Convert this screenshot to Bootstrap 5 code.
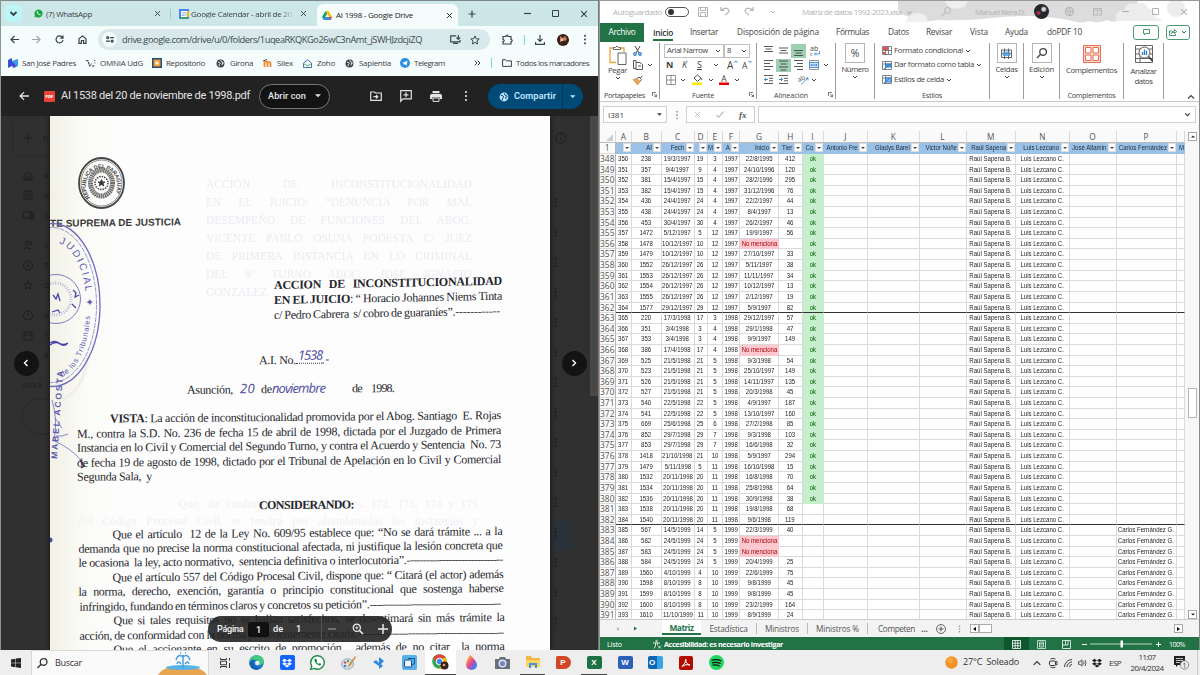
<!DOCTYPE html>
<html lang="es">
<head>
    <meta charset="UTF-8">
    <meta name="viewport" content="width=device-width, initial-scale=1.0">
    <title>Escritorio</title>
    <link href="https://cdn.jsdelivr.net/npm/bootstrap@5.3.0/dist/css/bootstrap.min.css" rel="stylesheet">
    <style>
        body {
            width: 1200px;
            height: 675px;
            overflow: hidden;
            font-family: "Open Sans", "Noto Sans", sans-serif;
            font-size: 8px;
            line-height: 1.2;
            color: #3c4043;
            background: #eee;
        }
        svg { display: block; flex: none; overflow: visible; }
        .ln-ico { fill: none; stroke: currentColor; stroke-width: 1.2; }
        [data-w], .nw { white-space: nowrap; display: inline-block; }
        .bar { display: grid; align-items: center; }
        .bar > svg { justify-self: center; }

        /* Navegador */
        .browser { width: 599px; height: 650px; border-left: 1px solid #8a9596; border-right: 1px solid #777; }
        .tabs-row {
            height: 26px; background: #cde7e9; border-top: 1px solid #7c8889;
            grid-template-columns: 30px 15px 105px 13px 12px 15px 106px 13px 7px 141px 27px 28px 28px 29px 28px;
        }
        .tab-menu { width: 17px; height: 17px; border-radius: 5px; background: #bdf6f8; margin-left: 4px; }
        .tab-on { height: 22px; margin-top: 3px; background: #f5fcfc; border-radius: 6px 6px 0 0; padding: 0 5px; color: #202124; }
        .fade-end { -webkit-mask-image: linear-gradient(90deg, #000 88px, transparent 104px); }
        .vsep { width: 1px; height: 10px; background: #7fd5dc; justify-self: center; }
        .addr-row {
            height: 27px; background: #f5fcfc; color: #33474a;
            grid-template-columns: 3px 21px 23px 22px 24px 4px 392px 6px 22px 12px 20px 26px 18px;
        }
        .pill { height: 21px; border-radius: 11px; background: #d9e9eb; font-size: 9.3px; color: #3c4b4d; }
        .pill-ico { width: 15px; height: 15px; border-radius: 50%; background: #f5fcfc; margin: 0 5px 0 4px; }
        .marks-row {
            height: 23px; padding-bottom: 3px; background: #f5fcfc;
            grid-template-columns: 7px 78px 66px 64px 47px 40px 42px 55px 70px 14px 14px 4px 95px;
        }
        .bm { display: grid; grid-template-columns: 14px auto; align-items: center; justify-content: start; }
        .drive-row {
            height: 40px; background: #222; color: #e3e3e3; font-family: Roboto, sans-serif;
            grid-template-columns: 5px 36px 19px 198px 71px 31px 30px 30px 30px 30px 7px 95px;
        }
        .drive-name { font-size: 11px; }
        .open-with { height: 25px; border: 1px solid #747775; border-radius: 13px; background: #131314; font-size: 9.2px; font-weight: 500; }
        .share-btn { height: 25px; border-radius: 13px; background: #004a77; color: #c2e7ff; font-size: 9.2px; font-weight: 600; }

        /* Visor */
        .viewer { height: 534px; background: #303030; position: relative; overflow: hidden; }
        .under { position: absolute; inset: 0; color: #1c1c1c; }
        .sheet { position: absolute; left: 49px; top: 0; width: 500px; height: 534px; background: #fdfdfe; overflow: hidden; box-shadow: 0 0 5px #111; }
        .sheet-tint { position: absolute; inset: 0; background: linear-gradient(90deg, #f1f1e6, #fafaf5 30px, rgba(255,255,255,0) 70px); }
        .ghost { position: absolute; left: 156px; top: 59px; width: 266px; font: 11.5px/18px "Liberation Serif", serif; color: #ebebf0; filter: blur(.6px); }
        .ghost div, .ghost-low div { text-align: justify; text-align-last: justify; white-space: nowrap; }
        .ghost-low { position: absolute; left: 28px; top: 380px; width: 400px; font: bold 11.5px/17.4px "Liberation Serif", serif; color: #f3f3f7; filter: blur(.6px); }
        .scan { position: relative; transform: skewY(-.5deg); transform-origin: 0 0; font: 12px/14.45px "Liberation Serif", serif; color: #26262b; letter-spacing: -.27px; }
        .scan p { margin: 0; height: 14.45px; white-space: pre; }
        .court { padding-top: 98.5px; font: bold 10px/16px "Liberation Sans", sans-serif; color: #3a3a3a; transform: skewY(-.2deg); }
        .case-box { margin: 49px 0 0 224px; transform: skewY(-.6deg); transform-origin: 0 0; }
        .case-box p { height: 15px; }
        .hand { font: italic 400 13px/14px "Open Sans", sans-serif; color: #4b4b9c; letter-spacing: 0; }
        .sheet-art { position: absolute; left: 0; top: 0; }
        .round { position: absolute; top: 234.5px; width: 25px; height: 25px; border-radius: 50%; background: #131314; color: #fff; z-index: 3; }
        .pager {
            position: absolute; left: 207px; top: 500px; width: 184px; height: 26px; border-radius: 13px; z-index: 3;
            background: rgba(35,35,35,.9); color: #f1f1f1; font: 500 9.2px/26px Roboto, sans-serif;
            grid-template-columns: 9px 29px 23px 4px 16px 19px 13px 1px 19px 33px 17px;
        }
        .pg-num { width: 21px; height: 15px; line-height: 15px; text-align: center; background: #111; border-radius: 2px; }
        .sb-thumb { position: absolute; right: 0; top: 0; width: 8px; height: 280px; background: #484848; }

        /* Hoja de calculo */
        .xl { width: 601px; height: 650px; background: #fff; border-left: 1px solid #999; border-right: 1px solid #888; border-top: 1px solid #999; overflow: hidden; }
        .xl-title {
            height: 21px; color: #b3b3b3; position: relative;
            grid-template-columns: 13px 52px 28px 20px 24px 24px 24px 17px 124px 49px 51px 27px 32px 24px 33px 27px 29px;
        }
        .xl-title > * { position: relative; }
        .xl-title > .sky { position: absolute; left: 290px; top: 0; }
        .toggle { width: 24px; height: 10px; border: 1px solid #555; border-radius: 6px; padding: 1px 2px; }
        .toggle i { display: block; width: 6px; height: 6px; border-radius: 50%; background: #333; }
        .face { width: 15px; height: 15px; border-radius: 50%; background: radial-gradient(circle at 65% 35%, #d8d8d8 10%, transparent 24%), radial-gradient(circle at 30% 60%, #a34 8%, transparent 20%), #24282c; }
        .xl-tabs {
            height: 20px; font-size: 8.3px; color: #444;
            grid-template-columns: 44px 9px 37px 47px 99px 52px 38px 44px 35px 42px 86px 26px 7px 24px;
        }
        .file-tab { height: 19px; background: #217346; color: #fff; line-height: 18px; text-align: center; }
        .tab-cur { font-weight: 600; height: 17px; line-height: 17px; border-bottom: 2px solid #217346; justify-self: start; color: #333; }
        .tbtn { height: 15px; border: 1px solid #4c9a70; border-radius: 3px; color: #217346; }
        .ribbon { height: 60px; display: flex; border-bottom: 1px solid #c9c9c9; color: #444; font-size: 7.8px; padding-top: 1px; }
        .rg { height: 56px; border-right: 1px solid #9c9c9c; display: flex; flex-direction: column; }
        .rg-main { height: 48px; display: flex; }
        .rg-lab { font-size: 7.2px; line-height: 8px; height: 8px; display: flex; justify-content: center; position: relative; }
        .rg-lab svg { position: absolute; right: 2px; top: 1px; }
        .r3 { display: grid; grid-template-rows: 15px 14px 15px; align-content: start; align-items: center; }
        .font-box { border: 1px solid #c0c0c0; height: 14px; padding: 0 2px; display: flex; align-items: center; justify-content: space-between; }
        .sq-btn { width: 20px; height: 20px; border: 1px solid #b5b5b5; margin: 0 auto; }
        .pick { background: #9fd0b4; }
        .big { text-align: center; }
        .fx-row { height: 29px; padding: 4px 3px 0 3px; background: #fbfbfb; grid-template-columns: 64px 19px 69px 3px auto; align-items: start; }
        .fx-box { height: 17px; border: 1px solid #cfcfcf; background: #fff; }
        .grid-wrap { height: 488px; overflow: hidden; display: flex; background: #f7f7f7; }
        .cells { width: 585px; overflow: hidden; }
        .xrow { display: grid; height: 10.62px; background: #fff;
            grid-template-columns: 15.5px 16.5px 29.5px 33px 13px 15.5px 17px 39px 23.5px 21px 44.5px 51.5px 47px 49.5px 53.5px 47px 60px 8.5px;
            font: 7.3px/10px "Liberation Sans", Arial, sans-serif; color: #1f1f1f; }
        .xrow > div { border-right: 1px solid #dadada; border-bottom: 1px solid #dadada; display: flex; justify-content: center; white-space: nowrap; overflow: hidden; }
        .xrow span { flex: none; transform: scaleX(.83); }
        .xrow > .rh { font: 8.4px/10px "Open Sans", sans-serif; color: #555; background: #fbfbfb; border-right-color: #b5b5b5; }
        .xrow > .rh span, .letters span { transform: none; }
        .xrow.letters { height: 12px; }
        .xrow.letters > div { font: 8.3px/12px "Open Sans", sans-serif; color: #555; background: #fafafa; border-bottom-color: #bbb; }
        .xrow.heads { height: 11px; }
        .xrow.heads > div:not(.rh) { background: #9bc2e6; justify-content: flex-end; color: #1c2b3a; border-color: #9bc2e6; }
        .heads div:not(.rh) > span { transform-origin: right center; }
        .drop { flex: none; width: 8px; height: 9px; background: #fff; margin-left: 1px; border: 1px solid #ddd; display: flex; align-items: center; justify-content: center; }
        .drop::after { content: ""; border: 2px solid transparent; border-top: 2.4px solid #444; border-bottom: 0; }
        .xrow > .ok { background: #c6efce; color: #006100; border-color: #c6efce; }
        .xrow > .bad { background: #ffc7ce; color: #9c0006; border-color: #ffc7ce; }
        .xrow.year > div:not(.rh) { border-bottom-color: #333; }
        .vscroll { width: 14px; padding: 1px 2px 0 3px; display: flex; flex-direction: column; justify-content: space-between; }
        .sbtn { width: 9px; height: 9px; border: 1px solid #aaa; background: #fff; display: flex; align-items: center; justify-content: center; }
        .vthumb { width: 9px; height: 30px; border: 1px solid #b5b5b5; background: #fff; margin-top: 247px; }
        .sheets { height: 18px; background: #f3f3f3; color: #555; font-size: 8.3px; border-top: 1px solid #ccc;
            grid-template-columns: 62px 39px 56px 51px 60px 10px 54px 18px 6px 7px 29px 179px 12px; }
        .sheets > .cur { background: #fff; color: #217346; font-weight: 700; height: 15px; line-height: 15px; align-self: start; border-bottom: 2px solid #217346; text-align: center; }
        .sheets > .sh { border-right: 1px solid #bbb; text-align: center; line-height: 11px; }
        .status { height: 14px; background: #217346; color: #fff; font-size: 7.2px;
            grid-template-columns: 7px 43px 14px 340px 25px 25px 25px 10px 64px 10px 6px auto; }
        .status .act { background: #0f5530; height: 14px; display: flex; align-items: center; justify-content: center; }

        /* Barra de tareas */
        .taskbar { height: 25px; background: #eee; color: #333;
            grid-template-columns: 31px 178px 32px 31px 30px 31px 31px 30px 31px 31px 31px 30px 31px 30px 32px 30px 31px 30px 31px 209px 20px 62px 6px 16px 15px 15px 14px 16px 22px 40px 28px auto; }
        .find-box { height: 25px; background: #fafafa; border: 1px solid #d8d8d8; border-bottom: 0; font-size: 9px; }
        .run { height: 25px; border-bottom: 1.5px solid #444; display: flex; align-items: center; justify-content: center; margin: 0 3px; }
        .run.on { background: #fff; margin: 0; }
        .tile { width: 15px; height: 13px; border-radius: 2px; color: #fff; font: bold 8px/13px "Liberation Sans", sans-serif; text-align: center; justify-self: center; }
    </style>
</head>
<body>

    <svg width="0" height="0" class="position-absolute">
        <defs>
            <symbol id="cv" viewBox="0 0 6 6"><path d="M1 2l2 2 2-2" fill="none" stroke="currentColor"/></symbol>
            <symbol id="xx" viewBox="0 0 8 8"><path d="M1.2 1.2l5.6 5.6M6.8 1.2L1.2 6.8" fill="none" stroke="currentColor" stroke-width="1.1"/></symbol>
            <symbol id="dn" viewBox="0 0 8 4"><path d="M0 0h8L4 4z" fill="currentColor"/></symbol>
            <symbol id="dots" viewBox="0 0 4 12"><circle cx="2" cy="2" r="1.1"/><circle cx="2" cy="6" r="1.1"/><circle cx="2" cy="10" r="1.1"/></symbol>
            <symbol id="globe" viewBox="0 0 10 10"><circle cx="5" cy="5" r="4.4" fill="currentColor"/><path d="M2 3.4l2 .4.8 1.4-1.4 1 .2 2M5.4 1.4l.3 1.6 1.6.3.9 1.5-1.5.4.2 1.8" fill="none" stroke="var(--land, #f5fcfc)" stroke-width="1"/></symbol>
            <symbol id="wa" viewBox="0 0 16 16"><path d="M8 .8a7.2 7.2 0 0 0-6.2 10.8L.8 15.3l3.8-1A7.2 7.2 0 1 0 8 .8z"/><path d="M5.3 4c-1 .9-.8 2.6.9 4.6s3.800 3 5 2.300c.8-.5.8-1.300.5-1.500l-1.500-.8-.9.9c-1-.4-1.900-1.300-2.300-2.300l.7-.8-.7-1.900c-.3-.7-1.100-.9-1.700-.5z" fill="#fff"/></symbol>
            <symbol id="box" viewBox="0 0 12 12"><path d="M3 1L0 3l3 2 3-2zM9 1L6 3l3 2 3-2zM3 5L0 7l3 2 3-2zM9 5L6 7l3 2 3-2zM6 7.700L3.200 9.600 6 11.400l2.800-1.800z" fill="currentColor"/></symbol>
            <symbol id="lau" viewBox="0 0 5 5"><path d="M.5 4V.5H4M2 2l2.500 2.500M4.500 2.500v2h-2" fill="none" stroke="currentColor" stroke-width=".7"/></symbol>
        </defs>
    </svg>

    <div class="d-flex">
        <!-- Navegador -->
        <div class="browser">
            <div class="bar tabs-row">
                <div class="tab-menu d-flex align-items-center justify-content-center"><svg width="9" height="9"><use href="#cv" stroke-width="1.2"/></svg></div>
                <svg width="9" height="9" fill="#12a83b" class="justify-self-start"><use href="#wa"/></svg>
                <span><span data-w="46">(7) WhatsApp</span></span>
                <svg width="7" height="7"><use href="#xx"/></svg>
                <div class="vsep"></div>
                <svg width="10" height="10" viewBox="0 0 10 10"><path d="M0 0h10v10H0z" fill="#4285f4"/><path d="M8 2h2v6H8z" fill="#fbbc04"/><path d="M2 8h6v2H2z" fill="#34a853"/><path d="M2 2h6v6H2z" fill="#fff"/><text x="5" y="6.800" font-size="4.500" text-anchor="middle" fill="#4285f4">20</text></svg>
                <span class="fade-end"><span data-w="101">Google Calendar - abril de 20</span></span>
                <svg width="7" height="7"><use href="#xx"/></svg>
                <div></div>
                <div class="tab-on d-flex align-items-center">
                    <svg width="10" height="9" viewBox="0 0 20 18"><path d="M7 0h6l7 12h-6z" fill="#fbbc04"/><path d="M7 0L0 12l3 6 7-12z" fill="#1aa15f"/><path d="M6 12h14l-3 6H3z" fill="#4285f4"/><path d="M14 12h6l-3 6z" fill="#ea4335"/></svg>
                    <span class="ms-1 me-auto"><span data-w="77">AI 1998 - Google Drive</span></span>
                    <svg width="7" height="7"><use href="#xx"/></svg>
                </div>
                <svg width="8" height="8" class="ln-ico" viewBox="0 0 8 8"><path d="M4 .5v7M.5 4h7"/></svg>
                <div></div>
                <svg width="7" height="7" viewBox="0 0 7 7" class="ln-ico"><path d="M0 3.500h7"/></svg>
                <svg width="7" height="7" viewBox="0 0 7 7" class="ln-ico"><path d="M.5.5h6v6h-6z" stroke-width="1"/></svg>
                <svg width="8" height="8"><use href="#xx"/></svg>
            </div>

            <div class="bar addr-row">
                <div></div>
                <svg width="9" height="9" viewBox="0 0 9 9" class="ln-ico"><path d="M9 4.500H1M4.500 1L1 4.500 4.500 8"/></svg>
                <svg width="9" height="9" viewBox="0 0 9 9" class="ln-ico" opacity=".45"><path d="M0 4.500h8M4.500 1L8 4.500 4.500 8"/></svg>
                <svg width="9" height="9" viewBox="0 0 9 9" class="ln-ico"><path d="M7.500 2.500A3.500 3.500 0 1 0 8 5M8 .5v2.700H5.300"/></svg>
                <svg width="9" height="9" viewBox="0 0 9 9" class="ln-ico"><path d="M1 3.700L4.500.9 8 3.700v4.700H5.600V5.500H3.400v2.900H1z"/></svg>
                <div></div>
                <div class="pill d-flex align-items-center">
                    <div class="pill-ico d-flex align-items-center justify-content-center"><svg width="8" height="7" viewBox="0 0 8 7" class="ln-ico"><circle cx="1.700" cy="1.700" r="1"/><path d="M4 1.700h4M0 5.200h4"/><circle cx="6.200" cy="5.200" r="1"/></svg></div>
                    <span class="me-auto"><span data-w="300">drive.google.com/drive/u/0/folders/1uqeaRKQKGo26wC3nAmt_jSWHJzdcjiZQ</span></span>
                    <svg width="11" height="9" viewBox="0 0 11 9" class="ln-ico"><path d="M6 .8H.7v6H10V5M3 8.400h5M8.300 0v4M6.500 2.500l1.800 1.800 1.800-1.800"/></svg>
                    <svg width="10" height="10" viewBox="0 0 10 10" class="ln-ico" style="margin:0 10px 0 9px"><path d="M5 .9l1.200 2.800 3 .3-2.300 2 .7 3L5 7.400 2.400 9l.7-3L.8 4l3-.3z" stroke-width="1"/></svg>
                </div>
                <div></div>
                <svg width="11" height="11" viewBox="0 0 11 11" class="ln-ico"><path d="M1 2.500h3q0-1.500 1-1.500t1 1.500h3v3q1.200 0 1.200 1T9 7.500V10H1V7.500q1.200 0 1.200-1T1 5.500z"/></svg>
                <div class="vsep"></div>
                <svg width="10" height="10" viewBox="0 0 10 10" class="ln-ico"><path d="M5 0v6M2.500 3.800L5 6.300l2.500-2.500M.6 7v2.300h8.800V7"/></svg>
                <svg width="12" height="12" viewBox="0 0 12 12"><circle cx="6" cy="6" r="6" fill="#3a2018"/><path d="M3 2l3 2 2-2 2 3-2 2-3-1-2 3z" fill="#c08060"/><circle cx="5" cy="6" r="1.300" fill="#eccdb4"/></svg>
                <svg width="4" height="11" fill="currentColor"><use href="#dots"/></svg>
            </div>

            <div class="bar marks-row">
                <div></div>
                <div class="bm"><svg width="10" height="10" viewBox="0 0 10 10"><path d="M0 2l4-2v8L0 10z" fill="#2b57d9"/><path d="M4 3l6-2v7l-4 2z" fill="#2f9ef0"/><path d="M2 1l6 7-3 2z" fill="#5a35c9"/></svg><span data-w="54">San José Padres</span></div>
                <div class="bm"><svg width="10" height="9" viewBox="0 0 10 9" class="ln-ico"><path d="M0 1.500l2 .3 1.500 5 2.500-2M6 7h3M8 1.500h1.200M8.500 4h.8" stroke-dasharray="2.500 .8"/></svg><span data-w="43">OMNIA UdG</span></div>
                <div class="bm"><svg width="10" height="10" viewBox="0 0 10 10"><path d="M0 0h10v10H0z" fill="#1c4e80"/><path d="M1.500 1.500h7v7h-7z" fill="#f39c2d"/><circle cx="5" cy="5" r="1.800" fill="#fff1d6"/></svg><span data-w="39">Repositorio</span></div>
                <div class="bm"><svg width="9" height="9"><use href="#globe"/></svg><span data-w="23">Girona</span></div>
                <div class="bm"><svg width="9" height="8" viewBox="0 0 9 8" fill="none" stroke="#f58220" stroke-width="1.700"><path d="M1.500 8V3.500q1.500-2 3 0V8M4.500 4q1.500-2.500 3 0v4"/><path d="M0 2l4-1.500" stroke="#444" stroke-width="1"/></svg><span data-w="16">Silex</span></div>
                <div class="bm"><svg width="9" height="9" viewBox="0 0 9 9" fill="none" stroke="#4a6fb5"><path d="M.5 4L4.500.8l4 3.200v4.500h-8z"/><path d="M.5 4.500l4 2.500 4-2.500" stroke="#52b36b"/></svg><span data-w="18">Zoho</span></div>
                <div class="bm"><svg width="9" height="9"><use href="#globe"/></svg><span data-w="32">Sapientia</span></div>
                <div class="bm"><svg width="10" height="10" viewBox="0 0 10 10"><circle cx="5" cy="5" r="5" fill="#2f8fdf"/><path d="M2 5l5.500-2.300L6.600 7.500 4.800 6.200l-.8.9-.2-1.500z" fill="#fff"/></svg><span data-w="31">Telegram</span></div>
                <svg width="7" height="6" viewBox="0 0 7 6" class="ln-ico"><path d="M.7.7L3 3 .7 5.300M3.700.7L6 3 3.700 5.300" stroke-width="1"/></svg>
                <div class="vsep"></div>
                <div></div>
                <div class="bm"><svg width="10" height="8" viewBox="0 0 10 8" class="ln-ico"><path d="M.6.7h3l1 1.200h4.800v5.500H.6z" stroke-width="1"/></svg><span data-w="73">Todos los marcadores</span></div>
            </div>

            <div class="bar drive-row">
                <div></div>
                <svg width="10" height="10" viewBox="0 0 9 9" class="ln-ico"><path d="M9 4.500H1M4.500 1L1 4.500 4.500 8"/></svg>
                <svg width="11" height="11" viewBox="0 0 11 11"><rect width="11" height="11" rx="1" fill="#ea4335" x="-2"/><text x="3.500" y="7.300" font-size="4.300" font-weight="900" text-anchor="middle" fill="#fff">PDF</text></svg>
                <span class="drive-name"><span data-w="189">AI 1538 del 20 de noviembre de 1998.pdf</span></span>
                <div class="open-with d-flex align-items-center justify-content-between px-2"><span data-w="38">Abrir con</span><svg width="6" height="3.500"><use href="#dn"/></svg></div>
                <div></div>
                <svg width="12" height="10" viewBox="0 0 12 10" class="ln-ico"><path d="M.7 1h3.800l1 1h5.800v7.400H.7zM3.500 5.700h4M6 3.900l1.800 1.800L6 7.500"/></svg>
                <svg width="12" height="12" viewBox="0 0 12 12" class="ln-ico"><path d="M.7.7h10.600v8.200H3L.7 11.200zM6 2.300v5M3.500 4.800h5"/></svg>
                <svg width="12" height="11" viewBox="0 0 12 11" fill="currentColor"><path d="M2.500 0h7v2.300h-7zM1.500 3h9A1.500 1.500 0 0 1 12 4.500V8H9.700V6.300H2.300V8H0V4.500A1.500 1.500 0 0 1 1.500 3z"/><path d="M3 7h6v3.400H3z" fill="none" stroke="currentColor"/></svg>
                <svg width="4" height="12" fill="currentColor"><use href="#dots"/></svg>
                <div></div>
                <div class="share-btn d-flex align-items-center">
                    <svg width="10" height="10" style="margin:2px 5px 0 11px;--land:#004a77"><use href="#globe"/></svg>
                    <span data-w="42">Compartir</span>
                    <div style="width:1px;height:25px;background:#00355a;margin:0 7px 0 6px"></div>
                    <svg width="5.500" height="3"><use href="#dn"/></svg>
                </div>
            </div>

            <!-- Visor del documento -->
            <div class="viewer">
                <svg class="under" width="597" height="534" viewBox="1 116 597 534" fill="none" stroke="#1c1c1c">
                    <path d="M13 122v28q0 6 5 6h32" stroke="#2a2a2a"/>
                    <path d="M28 133.500v9M23.500 138h9M24 180v-5l4-3 4 3v5zM26.500 180v-3h3v3M24 191h8v8h-8zM23 212h9v6h-9zM30 214h4v5h-4z"/>
                    <circle cx="28" cy="195" r="2"/><circle cx="27" cy="243" r="2"/><path d="M23 249q4-3 8 0M30 241q3 2 0 4"/>
                    <circle cx="28" cy="265.500" r="4.500"/><path d="M28 263v3l2 1M28 281l1.200 3 3 .2-2.300 2 .8 3-2.700-1.700-2.700 1.700.8-3-2.300-2 3-.2z"/>
                    <circle cx="28" cy="315.500" r="4.500"/><path d="M28 313v3M24 332h8v8h-8zM24 335h8"/>
                    <rect x="22" y="399" width="60" height="35" rx="17" stroke="#292929"/>
                    <g fill="#1c1c1c" stroke="none" font-size="8"><text x="43" y="141">N</text><text x="44" y="179">P</text><text x="44" y="198">M</text><text x="44" y="218">O</text><text x="44" y="248">C</text><text x="44" y="268">R</text><text x="44" y="288">D</text><text x="44" y="318">S</text><text x="44" y="338">P</text><text x="44" y="358">A</text><text x="22" y="388">909,8</text></g>
                    <path d="M550 521h23v29h-23z" fill="#2a3239" stroke="none"/>
                    <circle cx="561" cy="138" r="5"/><path d="M561 137v3.500M561 135v1"/>
                    <path d="M555.500 198v428" stroke-dasharray="2 1.500 2 1.500 2 21" stroke-width="1.500"/>
                </svg>
                <div class="sb-thumb"></div>

                <div class="sheet">
                    <div class="sheet-tint"></div>
                    <div class="ghost">
                        <div>ACCION DE INCONSTITUCIONALIDAD</div>
                        <div>EN EL JUICIO: “DENUNCIA POR MAL</div>
                        <div>DESEMPEÑO DE FUNCIONES DEL ABOG.</div>
                        <div>VICENTE PABLO OSUNA PODESTA C/ JUEZ</div>
                        <div>DE PRIMERA INSTANCIA EN LO CRIMINAL</div>
                        <div>DEL 8º TURNO ABOG. JOSE IGNACIO</div>
                        <div style="text-align-last:left">GONZALEZ</div>
                    </div>
                    <div class="ghost-low">
                        <div style="padding-left:100px">Que, de conformidad con los Arts. 172, 173, 174 y 175</div>
                        <div>del Código Procesal Civil, se tendrá por abandonadas las instancias y</div>
                    </div>

                    <div class="scan">
                        <div class="court"><span data-w="131">TE SUPREMA DE JUSTICIA</span></div>
                        <div class="case-box">
                            <p><b data-s="228">ACCION DE INCONSTITUCIONALIDAD</b></p>
                            <p><span data-s="228"><b>EN EL JUICIO</b>: “ Horacio Johannes Niems Tinta</span></p>
                            <p><span data-s="226">c/ Pedro Cabrera  s/ cobro de guaraníes”.------------</span></p>
                        </div>
                        <p style="margin:29.500px 0 0 209px"><span data-w="37">A.I. No.</span><span style="border-bottom:1px dotted #445;display:inline-block;height:12px;width:26px"><span class="hand" style="position:relative;top:-4px;left:2px"><span data-w="24">1538</span></span></span><span class="hand">.-</span></p>
                        <p style="margin:14.500px 0 0 137px"><span data-w="46">Asunción,</span><span class="hand" style="margin-left:7px"><span data-w="15">20</span></span><span style="margin-left:6px" data-w="11">de</span><span class="hand"><span data-w="53">noviembre</span></span><span style="margin-left:27px" data-w="10">de</span><span style="margin-left:9px" data-w="23">1998.</span></p>
                        <div style="margin:15px 0 0 27px">
                            <p style="padding-left:33px"><span data-s="391"><b>VISTA</b>: La acción de inconstitucionalidad promovida por el Abog. Santiago  E. Rojas</span></p>
                            <p><span data-s="424">M., contra la S.D. No. 236 de fecha 15 de abril de 1998, dictada por el Juzgado de Primera</span></p>
                            <p><span data-s="424">Instancia en lo Civil y Comercial del Segundo Turno, y contra el Acuerdo y Sentencia  No. 73</span></p>
                            <p><span data-s="424">de fecha 19 de agosto de 1998, dictado por el Tribunal de Apelación en lo Civil y Comercial</span></p>
                            <p><span data-s="75">Segunda Sala,  y</span></p>
                            <p style="margin:15px 0 13.500px 182px"><b data-w="95">CONSIDERANDO:</b></p>
                            <div style="padding-left:1.500px">
                                <p style="padding-left:34px"><span data-s="390">Que el artículo  12 de la Ley No. 609/95 establece que: “No se dará trámite ... a la</span></p>
                                <p><span data-s="424">demanda que no precise la norma constitucional afectada, ni justifique la lesión concreta que</span></p>
                                <p><span data-s="328">le ocasiona  la ley, acto normativo,  sentencia definitiva o interlocutoria”.</span><span data-w="96">------------------------------</span></p>
                                <p style="padding-left:34px"><span data-s="391">Que el artículo 557 del Código Procesal Civil, dispone que: “ Citará (el actor) además</span></p>
                                <p><span data-s="425">la norma, derecho, exención, garantía o principio constitucional que sostenga haberse</span></p>
                                <p style="padding-left:1px"><span data-s="290">infringido, fundando en términos claros y concretos su petición”.</span><span data-w="131">-----------------------------------------</span></p>
                                <p style="padding-left:35px"><span data-s="391">Que si tales requisitos no se hallan satisfechos, se desestimará sin más trámite la</span></p>
                                <p style="padding-left:1px"><span data-s="278">acción, de conformidad con la norma precedentemente citada.</span><span data-w="146">----------------------------------------------</span></p>
                                <p style="padding-left:35px"><span data-s="391">Que el accionante en su escrito de promoción,  además de no citar  la norma</span></p>
                            </div>
                        </div>
                    </div>

                    <!-- Sellos -->
                    <svg class="sheet-art" width="500" height="534" viewBox="50 116 500 534" fill="none">
                        <g stroke="#444">
                            <ellipse cx="101.500" cy="183" rx="22.500" ry="25" stroke-width="1.800"/>
                            <ellipse cx="101.500" cy="183" rx="20.500" ry="23" stroke-width=".6"/>
                            <ellipse cx="101.500" cy="183" rx="11" ry="13" stroke-width="5" stroke-dasharray="1.500 .5" stroke="#707070"/>
                            <circle cx="101.500" cy="183" r="6.500" stroke-width="1.500" stroke-dasharray="1.500 1"/>
                            <path d="M101.500 179.500l1 2.500h2.500l-2 1.500.8 2.500-2.300-1.500-2.300 1.500.8-2.500-2-1.500h2.500z" fill="#333"/>
                        </g>
                        <path id="ring" d="M90 197.500A15.800 17.500 0 1 1 113 197.500"/>
                        <text font-family="Liberation Sans" font-size="5.500" font-weight="700" fill="#444"><textPath href="#ring" textLength="73">REPUBLICA DEL PARAGUAY</textPath></text>
                        <path d="M62 400q22-10 26-44" stroke="#f1efe8" stroke-width="3"/>
                        <g stroke="#6f6cc0">
                            <ellipse cx="52" cy="305" rx="48" ry="81.500" stroke-width="1.300"/>
                            <ellipse cx="52" cy="305" rx="44.500" ry="77.500" stroke-width=".7" stroke-dasharray="5 1"/>
                            <circle cx="56" cy="299" r="24.500" stroke-width=".9"/>
                            <circle cx="55" cy="299" r="16" stroke-width="3" stroke-dasharray="1 1.500" stroke="#b9b7dd"/>
                            <path d="M73 290l3 3-1 4 4-2M72 304l4 4M53 295l3 4 2-5 2 7M52 312l6-2 2 3M50 343q5-3 9 0t9 0M50 345q6-4 10-1t8-1" stroke-width="1.300" stroke="#4644b0"/>
                            <path d="M52 440q20 8 31 23M55 418l7 10M52 400q6 20 2 40M56 436q6 1 12-2" stroke-width=".8"/>
                            <path d="M80 460l4 6-3 2" stroke="#334" stroke-width="1.500"/>
                        </g>
                        <path id="arc1" d="M56 243A31 62 0 0 1 85 322"/>
                        <path id="arc2" d="M62 377A37 68 0 0 0 90 309"/>
                        <g fill="#5d5ab4" font-family="Liberation Sans">
                            <text font-size="10"><textPath href="#arc1" startOffset="3" textLength="72">JUDICIAL ✦</textPath></text>
                            <text font-size="7.500"><textPath href="#arc2" textLength="70">de los Tribunales</textPath></text>
                            <text font-size="8.500" font-weight="700" transform="translate(57 459) rotate(-86)" textLength="88">MABEL ACOSTA</text>
                        </g>
                        <circle cx="50" cy="540" r="2.500" fill="#4a49b0"/>
                    </svg>
                </div>

                <div class="round d-flex align-items-center justify-content-center" style="left:12.500px"><svg width="6" height="8" viewBox="0 0 6 8" fill="none" stroke="#fff" stroke-width="1.400"><path d="M4.500 1l-3 3 3 3"/></svg></div>
                <div class="round d-flex align-items-center justify-content-center" style="right:11.500px"><svg width="6" height="8" viewBox="0 0 6 8" fill="none" stroke="#fff" stroke-width="1.400"><path d="M1.500 1l3 3-3 3"/></svg></div>
                <div class="pager bar">
                    <div></div><span data-w="27">Página</span><div class="pg-num ms-auto">1</div><div></div><span>de</span><span class="text-center">1</span><div></div>
                    <div style="height:26px;background:#555"></div>
                    <svg width="8" height="8" viewBox="0 0 8 8" class="ln-ico" opacity=".5"><path d="M0 4h8"/></svg>
                    <svg width="12" height="12" viewBox="0 0 12 12" class="ln-ico"><circle cx="4.800" cy="4.800" r="3.600"/><path d="M7.500 7.500L11 11" stroke-width="1.600"/><path d="M3.300 4.800h3M4.800 3.300v3" stroke-width=".9"/></svg>
                    <svg width="10" height="10" viewBox="0 0 10 10" class="ln-ico"><path d="M0 5h10M5 0v10" stroke-width="1.400"/></svg>
                </div>
            </div>
        </div>

        <!-- Hoja de calculo -->
        <div class="xl">
            <div class="bar xl-title">
                <svg class="sky" width="310" height="21" viewBox="890 1 310 21" fill="#dcdcdc"><path d="M898 1h240q-1 8-8 8 0 8-9 10-6 5-14 1-10 4-18 1-8 3-16 0-40-8-80-3-30 3-55 2-14 3-24-2-12-2-16-8z"/><path d="M1116 18q0-8 8-8 3-8 12-6 8-4 12 4 8 2 8 10 6 1 6 3h-46z" fill="#ededed"/><circle cx="1176" cy="8" r="9" fill="#ececec"/><path d="M905 22q6-12 18-8 4 2 5 8zM945 1q4 10 14 7 8 0 8-7z" fill="#efefef"/></svg>
                <div></div>
                <span><span data-w="49">Autoguardado</span></span>
                <div class="toggle"><i></i></div>
                <svg width="10" height="10" viewBox="0 0 10 10" class="ln-ico"><path d="M.5.5h9v9h-9zM2.500.5v3h5v-3M2.500 9.500v-4h5v4" stroke-width="1"/></svg>
                <svg width="10" height="9" viewBox="0 0 10 9" class="ln-ico"><path d="M1 0v3.500h3.500M1 3.500Q5-.5 8 2t-3 6"/></svg>
                <svg width="10" height="9" viewBox="0 0 10 9" class="ln-ico"><path d="M9 0v3.500H5.500M9 3.500Q5-.5 2 2t3 6"/></svg>
                <svg width="6" height="6"><use href="#cv"/></svg>
                <div></div>
                <span class="nw"><span data-w="100">Matriz de datos 1992-2023.xlsx</span><svg width="7" height="7" class="d-inline ms-1"><use href="#cv"/></svg></span>
                <svg width="9" height="9" viewBox="0 0 9 9" class="ln-ico me-2" opacity=".7"><circle cx="5.500" cy="3.500" r="3"/><path d="M3.300 5.700L0 9"/></svg>
                <span><span data-w="50">Manuel Riera D.</span></span>
                <div class="face ms-auto me-1"></div>
                <svg width="9" height="9" viewBox="0 0 9 9" class="ln-ico"><circle cx="4.500" cy="4.500" r="4"/><path d="M.5 4.500h8M4.500.5q-3 4 0 8M4.500.5q3 4 0 8" stroke-width=".8"/></svg>
                <svg width="9" height="8" viewBox="0 0 9 8" class="ln-ico"><path d="M.5.5h8v6.500h-8zM.5 2.300h8M4.500 6V3.500" stroke-width=".9"/></svg>
                <svg width="7" height="7" viewBox="0 0 7 7" class="ln-ico"><path d="M0 3.500h7"/></svg>
                <svg width="7" height="7" viewBox="0 0 7 7" class="ln-ico"><path d="M.5.5h6v6h-6z" stroke-width="1"/></svg>
                <svg width="8" height="8"><use href="#xx"/></svg>
            </div>

            <div class="bar xl-tabs">
                <div class="file-tab"><span data-w="27">Archivo</span></div>
                <div></div>
                <div class="tab-cur"><span data-w="20">Inicio</span></div>
                <span><span data-w="28">Insertar</span></span>
                <span><span data-w="82">Disposición de página</span></span>
                <span><span data-w="33">Fórmulas</span></span>
                <span><span data-w="21">Datos</span></span>
                <span><span data-w="26">Revisar</span></span>
                <span><span data-w="18">Vista</span></span>
                <span><span data-w="23">Ayuda</span></span>
                <span><span data-w="35">doPDF 10</span></span>
                <div class="tbtn d-flex align-items-center justify-content-center"><svg width="7" height="6" viewBox="0 0 7 6" class="ln-ico"><path d="M.5.5h6v4H3L1.500 5.700V4.500h-1z" stroke-width=".8"/></svg></div>
                <div></div>
                <div class="tbtn d-flex align-items-center justify-content-around"><svg width="8" height="7" viewBox="0 0 8 7" class="ln-ico"><path d="M3 2H.5v4.500h6V5M2.500 4.500Q3 2 5.500 2V.6L7.600 2.700 5.500 4.500V3.200Q3.500 3 2.500 4.500z" stroke-width=".8"/></svg><svg width="6" height="6"><use href="#cv"/></svg></div>
            </div>

            <div class="ribbon">
                <!-- Portapapeles -->
                <div class="rg" style="width:60px">
                    <div class="rg-main">
                        <div class="big" style="width:33px;padding:2px 0 0 2px">
                            <svg class="mx-auto" width="18" height="20" viewBox="0 0 18 20" fill="none"><path d="M7 17.500H1V3h4M12 3h3v4" stroke="#e8a33d" stroke-width="1.300"/><path d="M4.500 4.500V2.500H6.500Q8-.5 9.500 2.500h2v2z" stroke="#666"/><path d="M9 8h8v11.500H9z" fill="#fff" stroke="#666"/></svg>
                            <div style="margin-top:1px"><span data-w="19">Pegar</span></div>
                            <svg class="mx-auto" width="6" height="6"><use href="#cv"/></svg>
                        </div>
                        <div class="r3">
                            <svg width="9" height="10" viewBox="0 0 9 10" class="ln-ico"><path d="M2 0l4 7M7 0L3 7" stroke-width="1"/><circle cx="2" cy="8" r="1.300" stroke="#2b7cd3"/><circle cx="7" cy="8" r="1.300" stroke="#2b7cd3"/></svg>
                            <div class="d-flex align-items-center gap-1"><svg width="10" height="10" viewBox="0 0 10 10" class="ln-ico"><path d="M3 2V.5H.5v8H3M3 2.500h4l2.500 2v5H3zM5 6h3" stroke-width=".9"/></svg><svg width="6" height="6"><use href="#cv"/></svg></div>
                            <svg width="10" height="10" viewBox="0 0 10 10"><path d="M0 4.500l4-1 3 3L4.500 10z" fill="#f0a354" stroke="#c97a2c" stroke-width=".6"/><path d="M4 3.500l2-1.500 2.500 2.500L7 6.500M7.500 3L9.500.7" stroke="#555" fill="none"/></svg>
                        </div>
                    </div>
                    <div class="rg-lab" style="padding-right:10px"><span data-w="41">Portapapeles</span><svg width="5" height="5"><use href="#lau"/></svg></div>
                </div>
                <!-- Fuente -->
                <div class="rg" style="width:97px">
                    <div class="rg-main">
                        <div class="r3 ps-1" style="width:90px">
                            <div class="d-flex"><div class="font-box" style="width:60px"><span data-w="41">Arial Narrow</span><svg width="6" height="6"><use href="#cv"/></svg></div><div class="font-box" style="width:26px"><span>8</span><svg width="6" height="6"><use href="#cv"/></svg></div></div>
                            <div class="bar" style="grid-template-columns:16px 15px 9px 19px 16px 12px;font-size:9px;padding-left:2px"><b>N</b><i>K</i><u>S</u><svg width="6" height="6"><use href="#cv"/></svg>
                                <svg width="12" height="10" viewBox="0 0 12 10"><text x="0" y="9" font-size="10" fill="#444">A</text><path d="M7.500 2.500L9 1l1.500 1.500" fill="none" stroke="#2b7cd3"/></svg>
                                <svg width="12" height="10" viewBox="0 0 12 10"><text x="1" y="9" font-size="8.500" fill="#444">A</text><path d="M7.500 1L9 2.500 10.500 1" fill="none" stroke="#2b7cd3"/></svg></div>
                            <div class="bar" style="grid-template-columns:12px 12px 17px 10px 16px 10px;padding-left:1px">
                                <svg width="10" height="10" viewBox="0 0 10 10" class="ln-ico"><path d="M.5.5h9v9h-9zM5 .5v9M.5 5h9" stroke-width=".8" stroke="#777"/></svg><svg width="6" height="6"><use href="#cv"/></svg>
                                <svg width="11" height="11" viewBox="0 0 11 11"><path d="M2 4l3.500-3L9 4 5.500 7.500zM9 4l1 2" fill="none" stroke="#555"/><path d="M0 8.500h10V11H0z" fill="#ffee00"/></svg><svg width="6" height="6"><use href="#cv"/></svg>
                                <svg width="10" height="11" viewBox="0 0 10 11"><path d="M0 8.500h10V11H0z" fill="#e80000"/><text x="5" y="7.500" font-size="8.500" text-anchor="middle" fill="#444">A</text></svg><svg width="6" height="6"><use href="#cv"/></svg>
                            </div>
                        </div>
                    </div>
                    <div class="rg-lab" style="padding-right:10px"><span data-w="22">Fuente</span><svg width="5" height="5"><use href="#lau"/></svg></div>
                </div>
                <!-- Alineación -->
                <div class="rg" style="width:79px">
                    <div class="rg-main">
                        <div class="r3 ps-1 w-100">
                            <div class="bar" style="grid-template-columns:15px 15px 15px 17px">
                                <svg width="9" height="13" viewBox="0 0 9 13" class="ln-ico"><path d="M0 2.500h9M1.500 5h6M0 7.500h9" stroke-width=".9"/></svg>
                                <svg width="9" height="13" viewBox="0 0 9 13" class="ln-ico"><path d="M0 4h9M1.500 6.500h6M0 9h9" stroke-width=".9"/></svg>
                                <div class="pick"><svg class="mx-auto" width="9" height="14" viewBox="0 0 9 13" fill="none"><path d="M0 6h9M1.500 8.500h6M0 11h9" stroke="#444" stroke-width=".9"/></svg></div>
                                <svg width="10" height="11" viewBox="0 0 10 11"><text x="0" y="6" font-size="7" fill="#444">ab</text><text x="0" y="11" font-size="5.500" fill="#444">c</text><path d="M9.500 6v3H4.500l1.500-1.500M4.500 9L6 10.500" fill="none" stroke="#2b7cd3" stroke-width=".8"/></svg>
                            </div>
                            <div class="bar" style="grid-template-columns:15px 15px 15px 16px 8px">
                                <svg width="9" height="10" viewBox="0 0 9 10" class="ln-ico"><path d="M0 .5h9M0 3.500h6M0 6.500h9M0 9.500h6" stroke-width=".9"/></svg>
                                <div class="pick"><svg class="mx-auto" width="9" height="13" viewBox="0 -1.500 9 13" fill="none"><path d="M0 .5h9M1.500 3.500h6M0 6.500h9M1.500 9.500h6" stroke="#444" stroke-width=".9"/></svg></div>
                                <svg width="9" height="10" viewBox="0 0 9 10" class="ln-ico"><path d="M0 .5h9M3 3.500h6M0 6.500h9M3 9.500h6" stroke-width=".9"/></svg>
                                <svg width="10" height="10" viewBox="0 0 10 10" fill="none"><path d="M.5.5h9v9h-9z" stroke="#777" stroke-width=".8"/><path d="M.5 2.500h9v5h-9z" fill="#cfe4f7" stroke="#2b7cd3" stroke-width=".8"/><path d="M2 5h6M3 4L2 5l1 1M7 4l1 1-1 1" stroke="#2b7cd3" stroke-width=".8"/></svg>
                                <svg width="6" height="6"><use href="#cv"/></svg>
                            </div>
                            <div class="bar" style="grid-template-columns:15px 15px 5px 14px 8px">
                                <svg width="9" height="9" viewBox="0 0 9 9" class="ln-ico"><path d="M0 .5h9M5 3.300h4M5 5.800h4M0 8.500h9" stroke-width=".9"/><path d="M4 4.500H.5M2 3L.5 4.500 2 6" stroke="#2b7cd3" stroke-width=".9"/></svg>
                                <svg width="9" height="9" viewBox="0 0 9 9" class="ln-ico"><path d="M0 .5h9M5 3.300h4M5 5.800h4M0 8.500h9" stroke-width=".9"/><path d="M0 4.500h3.500M2 3l1.500 1.500L2 6" stroke="#2b7cd3" stroke-width=".9"/></svg>
                                <div></div>
                                <svg width="11" height="10" viewBox="0 0 11 10"><text x="0" y="6" font-size="6.500" fill="#444" transform="rotate(-25 3 5)">ab</text><path d="M3 9.500L10 3M10 5.500V3H7.500" fill="none" stroke="#2b7cd3" stroke-width=".8"/></svg>
                                <svg width="6" height="6"><use href="#cv"/></svg>
                            </div>
                        </div>
                    </div>
                    <div class="rg-lab" style="padding-right:10px"><span data-w="34">Alineación</span><svg width="5" height="5"><use href="#lau"/></svg></div>
                </div>
                <!-- Número -->
                <div class="rg big" style="width:39px">
                    <div class="sq-btn" style="font-size:10.500px;line-height:18px">%</div>
                    <div style="margin-top:2px"><span data-w="27">Número</span></div>
                    <svg class="mx-auto" width="6" height="6"><use href="#cv"/></svg>
                </div>
                <!-- Estilos -->
                <div class="rg" style="width:115px">
                    <div class="rg-main ps-1">
                        <div class="r3" style="padding-left:3px">
                            <div class="d-flex align-items-center"><svg width="10" height="9" viewBox="0 0 10 9" fill="none"><path d="M.5.5h9v8h-9zM3.500.5v8M6.500.5v8M.5 4.500h9" stroke="#666" stroke-width=".8"/><path d="M1 1h5v3H1zM1 6h3v2H1z" fill="#e0525c"/></svg><span data-w="69" style="margin:0 2px 0 2px">Formato condicional</span><svg width="6" height="6"><use href="#cv"/></svg></div>
                            <div class="d-flex align-items-center"><svg width="10" height="9" viewBox="0 0 10 9" fill="none"><path d="M.5.5h9v8h-9zM3.500.5v8M.5 3h9" stroke="#666" stroke-width=".8"/><path d="M4 3h5v3H4zM2 8l6-5" fill="#5aa5e0" stroke="#2b7cd3"/></svg><span data-w="80" style="margin:0 2px 0 2px">Dar formato como tabla</span><svg width="6" height="6"><use href="#cv"/></svg></div>
                            <div class="d-flex align-items-center"><svg width="10" height="9" viewBox="0 0 10 9" fill="none"><path d="M.5.5h9v8h-9zM3.500.5v8M.5 3h9" stroke="#666" stroke-width=".8"/><path d="M4 3h5v4H4zM2 8l6-5" fill="#8cc4f0" stroke="#2b7cd3"/></svg><span data-w="50" style="margin:0 2px 0 2px">Estilos de celda</span><svg width="6" height="6"><use href="#cv"/></svg></div>
                        </div>
                    </div>
                    <div class="rg-lab"><span data-w="20">Estilos</span></div>
                </div>
                <!-- Celdas -->
                <div class="rg big" style="width:34px">
                    <div class="sq-btn d-flex align-items-center justify-content-center"><svg width="11" height="11" viewBox="0 0 11 11" fill="none"><path d="M.5 2h10v7.500H.5zM3.500.5V11M7.500.5V11M.5 5.700h10" stroke="#555" stroke-width=".9"/><path d="M2 3.500h7v4.500H2z" fill="#4a9be0" fill-opacity=".8"/></svg></div>
                    <div style="margin-top:2px"><span data-w="22">Celdas</span></div>
                    <svg class="mx-auto" width="6" height="6"><use href="#cv"/></svg>
                </div>
                <!-- Edición -->
                <div class="rg big" style="width:36px">
                    <div class="sq-btn d-flex align-items-center justify-content-center"><svg width="10" height="10" viewBox="0 0 9 9" class="ln-ico"><circle cx="5.500" cy="3.500" r="3"/><path d="M3.300 5.700L0 9"/></svg></div>
                    <div style="margin-top:2px"><span data-w="25">Edición</span></div>
                    <svg class="mx-auto" width="6" height="6"><use href="#cv"/></svg>
                </div>
                <!-- Complementos -->
                <div class="rg big" style="width:64px">
                    <div class="rg-main flex-column" style="padding-top:2px">
                        <svg class="mx-auto" width="18" height="18" viewBox="0 0 18 18" fill="#fff" stroke="#e8694a"><path d="M.5.5h17v17H.5z" fill="#fbe3dc"/><path d="M2.500 2.500h5.500v5.500H2.500zM10 2.500h5.500v5.500H10zM2.500 10h5.500v5.500H2.500zM10 10h5.500v5.500H10z"/></svg>
                        <div style="margin-top:3px"><span data-w="51">Complementos</span></div>
                    </div>
                    <div class="rg-lab"><span data-w="48">Complementos</span></div>
                </div>
                <!-- Analizar datos -->
                <div class="rg big" style="width:40px;padding-top:2px">
                    <svg class="mx-auto" width="18" height="18" viewBox="0 0 18 18" fill="none"><path d="M.5.5h17v17H.5zM.5 4h17M.5 9h17M.5 13.500h17M5 4v13" stroke="#555" stroke-width=".9"/><circle cx="9.500" cy="7.500" r="5.500" fill="#fff" stroke="#555"/><path d="M13.500 11.500l4 4.500" stroke="#333" stroke-width="1.500"/><path d="M7.500 10V7M9.500 10V4.500M11.500 10V6" stroke="#2b7cd3" stroke-width="1.300"/></svg>
                    <div style="margin-top:3px;line-height:10px"><span data-w="26">Analizar</span><br><span data-w="18">datos</span></div>
                </div>
                <svg width="8" height="6" viewBox="0 0 8 6" class="ln-ico" style="margin:51px 0 0 23px"><path d="M1 4.500l3-3 3 3"/></svg>
            </div>

            <div class="bar fx-row">
                <div class="fx-box d-flex align-items-center justify-content-between px-1"><span data-w="16">I381</span><svg width="5" height="3"><use href="#dn"/></svg></div>
                <svg width="4" height="10" fill="#999" style="margin-top:4px"><use href="#dots"/></svg>
                <div class="fx-box d-flex align-items-center justify-content-around" style="color:#bbb"><svg width="7" height="7"><use href="#xx"/></svg><svg width="8" height="7" viewBox="0 0 8 7" class="ln-ico"><path d="M.5 4l2 2.300L7.500.7"/></svg><i style="font:italic bold 9px 'Liberation Serif',serif;color:#555">fx</i></div>
                <div></div>
                <div class="fx-box d-flex align-items-center justify-content-end"><svg width="7" height="7" class="me-1"><use href="#cv"/></svg></div>
            </div>

            <div class="grid-wrap">
                <div class="cells" id="cells"></div>
                <div class="vscroll">
                    <div class="sbtn"><svg width="4" height="3" viewBox="0 0 8 4"><path d="M0 4h8L4 0z" fill="#222"/></svg></div>
                    <div class="vthumb mb-auto"></div>
                    <div class="sbtn" style="color:#222"><svg width="4" height="3"><use href="#dn"/></svg></div>
                </div>
            </div>

            <div class="bar sheets">
                <div class="d-flex align-items-center" style="padding-left:16px;gap:15px"><svg width="3" height="4" viewBox="0 0 3 4"><path d="M3 0v4L0 2z" fill="#bbb"/></svg><svg width="3" height="5" viewBox="0 0 3 4"><path d="M0 0v4l3-2z" fill="#217346"/></svg></div>
                <div class="cur"><span data-w="24">Matriz</span></div>
                <div class="sh"><span data-w="38">Estadística</span></div>
                <div class="sh"><span data-w="34">Ministros</span></div>
                <div class="sh"><span data-w="43">Ministros %</span></div>
                <div></div>
                <div class="d-flex"><span data-w="37">Competen</span><b class="ms-auto me-1">...</b></div>
                <svg width="10" height="10" viewBox="0 0 10 10" class="ln-ico"><circle cx="5" cy="5" r="4.500" stroke-width=".9"/><path d="M5 2.500v5M2.500 5h5" stroke-width="1"/></svg>
                <div></div>
                <svg width="3" height="8" fill="#888"><use href="#dots"/></svg>
                <div class="d-flex justify-content-end"><div class="sbtn"><svg width="3" height="4" viewBox="0 0 3 4"><path d="M3 0v4L0 2z"/></svg></div><div class="sbtn" style="width:13px"></div></div>
                <div></div>
                <div class="sbtn ms-auto"><svg width="3" height="4" viewBox="0 0 3 4"><path d="M0 0v4l3-2z"/></svg></div>
            </div>
            <div class="bar status">
                <div></div>
                <span><span data-w="15">Listo</span></span>
                <svg width="9" height="9" viewBox="0 0 9 9" fill="none" stroke="#fff" stroke-width=".8"><circle cx="3.500" cy="1.200" r=".8"/><path d="M0 3h7M2.500 3v3L1 8.500M4.500 3v2M5 5.500l3 3M8 5.500l-3 3"/></svg>
                <b><span data-w="119">Accesibilidad: es necesario investigar</span></b>
                <div class="act"><svg width="9" height="9" viewBox="0 0 9 9" fill="none" stroke="#fff" stroke-width=".8"><path d="M.5.500h8v8h-8zM3.200.5v8M5.800.5v8M.5 3.200h8M.5 5.800h8"/></svg></div>
                <svg width="9" height="9" viewBox="0 0 9 9" fill="none" stroke="#fff" stroke-width=".7"><path d="M.5.500h8v8h-8zM2.500 2h4v5h-4zM3.300 3.500h2.400M3.300 5h2.400"/></svg>
                <svg width="9" height="9" viewBox="0 0 9 9" fill="none" stroke="#fff" stroke-width=".8"><path d="M.5.500h8v8h-8zM3.500.5v4.500M6 .5v4.500H.5"/></svg>
                <svg width="5" height="5" viewBox="0 0 5 5" stroke="#fff"><path d="M0 2.500h5"/></svg>
                <svg width="62" height="8" viewBox="0 0 62 8"><path d="M0 4h62" stroke="#cfe3d8" stroke-width=".9"/><path d="M30.500 0.500h2.500v7h-2.500z" fill="#fff"/></svg>
                <svg width="5" height="5" viewBox="0 0 5 5" stroke="#fff"><path d="M0 2.500h5M2.500 0v5"/></svg>
                <div></div>
                <span><span data-w="16">100%</span></span>
            </div>
        </div>
    </div>

    <!-- Barra de tareas -->
    <div class="bar taskbar">
        <svg width="10" height="10" viewBox="0 0 10 10" fill="#222"><path d="M0 1.400L4.500.7v4H0zM5 .6L10 0v4.700H5zM0 5.200h4.500v4L0 8.600zM5 5.200h5V10l-5-.7z"/></svg>
        <div class="find-box d-flex align-items-center">
            <svg width="11" height="10" viewBox="0 0 9 9" class="ln-ico" style="margin:0 7px 0 5px"><circle cx="5.500" cy="3.500" r="3"/><path d="M3.300 5.700L0 9"/></svg>
            <span data-w="27">Buscar</span>
            <svg class="ms-auto" width="50" height="24" viewBox="160 651 50 24"><path d="M160 675q5-9 24-9t25 9z" fill="#e8a44e"/><ellipse cx="185" cy="667.500" rx="17" ry="2.500" fill="#58b4e8"/><path d="M185 668v-13M185 657q-5-4-7 3M185 657q5-4 7 3M183 664q-3-4-4 0M187 664q3-4 4 0M182 653h1M187 653h1" fill="none" stroke="#4a9fe0" stroke-width="1.500"/></svg>
        </div>
        <svg width="11" height="10" viewBox="0 0 11 10" class="ln-ico"><path d="M.5 0v1.500h6V0M.5 3.200h6v3.600h-6zM.5 10V8.500h6V10M9.500 0v2.500M9.500 5v5" stroke-width="1"/></svg>
        <svg width="15" height="15" viewBox="0 0 15 15"><circle cx="7.500" cy="7.500" r="7.300" fill="#1b7fd1"/><path d="M.5 6Q2 .5 8 .3q6.500.5 6.700 6Q14.500 10 10 10q-2-.3-1-2 .5-3-3-3.200Q2.500 4.500.5 7.500z" fill="#45c981"/><path d="M.4 8q1.500-4 5-3.500-2 3 .5 6t6.500 1.500Q9 16.500 4 14 .5 12 .4 8z" fill="#1264ae"/><circle cx="8.300" cy="8" r="2.200" fill="#eee"/></svg>
        <div class="tile d-flex align-items-center justify-content-center" style="background:#1263ff;height:15px"><svg width="10" height="10"><use href="#box"/></svg></div>
        <svg width="15" height="15" viewBox="0 0 16 16"><path d="M8 .8a7.200 7.200 0 0 0-6.200 10.800L.8 15.300l3.800-1A7.200 7.200 0 1 0 8 .8z" fill="#fff" stroke="#1c8c4a" stroke-width="1.500"/><path d="M5.300 4c-1 .9-.8 2.600.9 4.600s3.800 3 5 2.300c.8-.5.8-1.300.5-1.500l-1.500-.8-.9.900c-1-.4-1.900-1.300-2.300-2.300l.7-.8-.7-1.900c-.3-.7-1.100-.9-1.700-.5z" fill="#1c8c4a"/></svg>
        <svg width="15" height="14" viewBox="0 0 15 14"><ellipse cx="6.500" cy="8" rx="6" ry="5.300" fill="#d6dfe6" stroke="#9ab"/><circle cx="4" cy="6.500" r="1.300" fill="#d55"/><circle cx="7" cy="5" r="1.200" fill="#5a5"/><circle cx="4" cy="10" r="1.300" fill="#48c"/><path d="M14 0L8 8l-1 4 3-3 5-8z" fill="#c99548"/></svg>
        <svg width="12" height="12" viewBox="0 0 12 12"><path d="M0 5l3-2 3 3V0l5 4-3 3 2 2-4 3V9z" fill="#2f8be0"/></svg>
        <div class="tile d-flex align-items-center justify-content-center" style="background:#56b0ea;height:15px"><svg width="11" height="10" viewBox="0 0 11 10" fill="none" stroke="#1c4f8c"><rect x=".5" y="2" width="7" height="7" rx="1" fill="#e9f5ff"/><path d="M4 .5h6.500v5L8 7"/></svg></div>
        <div class="run on"><svg width="17" height="16" viewBox="0 0 17 16"><circle cx="7.500" cy="7.500" r="7.300" fill="#34a853"/><path d="M1.200 4A7.300 7.300 0 0 1 13.800 4H7.500L5 9z" fill="#ea4335"/><path d="M13.800 4a7.300 7.300 0 0 1-6.500 10.800L10.700 9V4z" fill="#fbbc04"/><circle cx="7.500" cy="7.500" r="3.300" fill="#4285f4" stroke="#fff"/><circle cx="12.500" cy="11.500" r="4" fill="#3a2018"/><circle cx="12" cy="11" r="1.300" fill="#d8a888"/></svg></div>
        <svg width="11" height="15" viewBox="0 0 11 15"><defs><linearGradient id="dp" x1="0" y1="0" x2="1" y2="1"><stop offset=".2" stop-color="#f9a03a"/><stop offset=".5" stop-color="#e0459a"/><stop offset=".8" stop-color="#3f7df0"/></linearGradient></defs><path d="M4 0q7 6 7 10a5.500 5 0 0 1-11 0Q0 6 4 0z" fill="url(#dp)"/></svg>
        <svg width="15" height="12" viewBox="0 0 15 12"><path d="M0 2h4l1-2h5l1 2h4v10H0z" fill="#66707c"/><circle cx="7.500" cy="6.500" r="4" fill="#dfe6ee"/><circle cx="7.500" cy="6.500" r="2.600" fill="#7884c8"/></svg>
        <div class="run"><svg width="14" height="12" viewBox="0 0 14 12"><path d="M0 0h5l1 2h8v9H0z" fill="#f5b83c"/><path d="M0 4h14v7H0z" fill="#fcd265"/><path d="M3 7h8v5H9V9H5v3H3z" fill="#3f96dd"/></svg></div>
        <div class="tile" style="background:#d24726;border-radius:2px 8px 8px 2px">P</div>
        <div class="run"><div class="tile" style="background:#1e7145">X</div></div>
        <div class="tile" style="background:#2b5fb8">W</div>
        <div class="tile" style="background:linear-gradient(90deg,#1066b5 60%,#35a5e8 60%);text-align:left;padding-left:1px">O</div>
        <div class="tile d-flex align-items-center justify-content-center" style="background:#b30b00;width:14px;height:14px"><svg width="10" height="10" viewBox="0 0 10 10" fill="none" stroke="#fff"><path d="M1 8.500Q5 5 4.800 1.200 4.500 6 9 7 5 5.500 1 8.500z"/></svg></div>
        <svg width="15" height="15" viewBox="0 0 15 15"><circle cx="7.500" cy="7.500" r="7.500" fill="#1ed760"/><path d="M3 5.200q5-1.500 9 .6M3.500 7.800q4-1.200 7.600.6M4 10.200q3.300-.9 6.200.6" fill="none" stroke="#111" stroke-width="1.300" stroke-linecap="round"/></svg>
        <div></div>
        <svg width="13" height="13" viewBox="0 0 13 13"><circle cx="6.500" cy="6.500" r="6.200" fill="#f5902a"/><circle cx="5" cy="4.500" r="3" fill="#fbab3c"/></svg>
        <span style="font-size:9px;padding-left:2px"><span data-w="56">27°C&nbsp; Soleado</span></span>
        <div></div>
        <svg width="8" height="6" viewBox="0 0 8 6" class="ln-ico"><path d="M.7 4.800L4 1.500l3.300 3.300"/></svg>
        <svg width="8" height="10" viewBox="0 0 8 10" class="ln-ico"><rect x=".5" y="3" width="6" height="4.500" rx="1" stroke-width="1"/><path d="M1.500 1Q4-.3 6.500 1M1.500 9.200Q4 10.300 6.500 9.200M6.500 4l1.500-.5v3.500L6.500 6.500" stroke-width=".9"/></svg>
        <svg width="8" height="8" viewBox="0 0 8 8" class="ln-ico"><path d="M.5 8A7.500 7.500 0 0 1 8 .5M3 8a5 5 0 0 1 5-5M5.500 8A2.500 2.500 0 0 1 8 5.500" stroke-width=".9"/></svg>
        <svg width="9" height="8" viewBox="0 0 9 8" class="ln-ico"><path d="M.5 2.700h1.500L4 .8v6.400L2 5.300H.5zM5.500 2.500q1 1.500 0 3M7 1q2 3 0 6" stroke-width=".8"/></svg>
        <svg width="10" height="10" style="color:#222"><use href="#box"/></svg>
        <span class="ms-1"><span data-w="12">ESP</span></span>
        <div class="text-center" style="line-height:10.500px"><span data-w="17">11:07</span><br><span data-w="33">20/4/2024</span></div>
        <svg width="15" height="15" viewBox="0 0 15 15"><path d="M0 1h11v9H4l-2 2v-2H0z" fill="#222"/><path d="M2 3.500h7M2 5.500h7M2 7.500h4" stroke="#eee" stroke-width=".8"/><circle cx="10.500" cy="10" r="4.200" fill="#eee" stroke="#777" stroke-width=".8"/><text x="10.500" y="12.500" font-size="7" text-anchor="middle" fill="#333">1</text></svg>
        <div style="width:1px;height:25px;background:#ccc" class="mx-auto"></div>
    </div>

    <script>
        // Datos: N°, AI, fecha, inicio, tiempo
        const datos = `350 238 19/3/1997 22/8/1995 412
351 357 9/4/1997 24/10/1996 120
352 381 15/4/1997 28/2/1996 295
353 382 15/4/1997 31/12/1996 76
354 436 24/4/1997 22/2/1997 44
355 438 24/4/1997 8/4/1997 13
356 453 30/4/1997 26/2/1997 46
357 1472 5/12/1997 19/9/1997 56
358 1478 10/12/1997
359 1479 10/12/1997 27/10/1997 33
360 1552 26/12/1997 5/11/1997 38
361 1553 26/12/1997 11/11/1997 34
362 1554 26/12/1997 10/12/1997 13
363 1555 26/12/1997 2/12/1997 19
364 1577 29/12/1997 5/9/1997 82
365 220 17/3/1998 29/12/1997 57
366 351 3/4/1998 29/1/1998 47
367 353 3/4/1998 9/9/1997 149
368 386 17/4/1998
369 525 21/5/1998 9/3/1998 54
370 523 21/5/1998 25/10/1997 149
371 526 21/5/1998 14/11/1997 135
372 527 21/5/1998 20/3/1998 45
373 540 22/5/1998 4/9/1997 187
374 541 22/5/1998 13/10/1997 160
375 669 25/6/1998 27/2/1998 85
376 852 29/7/1998 9/3/1998 103
377 853 29/7/1998 16/6/1998 32
378 1418 21/10/1998 5/9/1997 294
379 1479 5/11/1998 16/10/1998 15
380 1532 20/11/1998 16/8/1998 70
381 1534 20/11/1998 25/8/1998 64
382 1536 20/11/1998 30/9/1998 38
383 1538 20/11/1998 19/8/1998 68
384 1540 20/11/1998 9/6/1998 119
385 567 14/5/1999 22/3/1999 40
386 582 24/5/1999
387 583 24/5/1999
388 584 24/5/1999 20/4/1999 25
389 1560 4/10/1999 22/6/1999 75
390 1598 8/10/1999 9/8/1999 45
391 1599 8/10/1999 9/8/1999 45
392 1600 8/10/1999 23/2/1999 164
393 1610 11/10/1999 8/9/1999 24`.split('\n').map(l => l.split(' '));

        const celda = (t, c = '') => `<div class="${c}">${t === '' ? '' : `<span>${t}</span>`}</div>`;
        const titulos = ['', 'AI', 'Fech', '', 'M', 'A', 'Inicio', 'Tier', 'Co', 'Antonio Fre', 'Gladys Barei', 'Victor Núñe', 'Raúl Sapena', 'Luis Lezcano', 'José Altamin', 'Carlos Fernández'];

        let html = '<div class="xrow letters"><div><svg class="ms-auto" width="8" height="8" style="margin:3px 2px 0"><path d="M8 0v7H1z" fill="#d0d0d0"/></svg></div>' +
            'ABCDEFGHIJKLMNOP'.split('').map(l => celda(l)).join('') + celda('') + '</div>';
        html += '<div class="xrow heads">' + celda('1', 'rh') +
            titulos.map(t => `<div><span>${t}</span><i class="drop"></i></div>`).join('') + celda('M') + '</div>';

        datos.forEach(([n, ai, fecha, inicio, tiempo], i) => {
            const fila = 348 + i;
            const [d, m, a] = fecha.split('/');
            html += `<div class="xrow ${fila === 362 || fila === 382 ? 'year' : ''}">` +
                celda(fila, 'rh') + [n, ai, fecha, d, m, a].map(t => celda(t)).join('') +
                (inicio ? celda(inicio) : celda('No menciona', 'bad')) + celda(tiempo || '') +
                (fila <= 380 ? celda('ok', 'ok') : celda('')) + celda('') + celda('') + celda('') +
                celda('Raúl Sapena B.') + celda('Luis Lezcano C.') + celda('') +
                celda(fila >= 383 ? 'Carlos Fernández G.' : '') + celda('') + '</div>';
        });
        document.getElementById('cells').innerHTML = html;

        // Ajusta el espaciado de letras (data-w) o de palabras (data-s) al ancho indicado
        document.querySelectorAll('[data-w]').forEach(el => {
            const base = parseFloat(getComputedStyle(el).letterSpacing) || 0;
            const dif = (el.dataset.w - el.getBoundingClientRect().width) / el.textContent.length;
            el.style.letterSpacing = (base + dif) + 'px';
        });
        document.querySelectorAll('[data-s]').forEach(el => {
            const huecos = el.textContent.split(' ').length - 1;
            el.style.wordSpacing = (el.dataset.s - el.getBoundingClientRect().width) / huecos + 'px';
        });
    </script>

    <script src="https://cdn.jsdelivr.net/npm/bootstrap@5.3.0/dist/js/bootstrap.bundle.min.js"></script>
</body>
</html>
